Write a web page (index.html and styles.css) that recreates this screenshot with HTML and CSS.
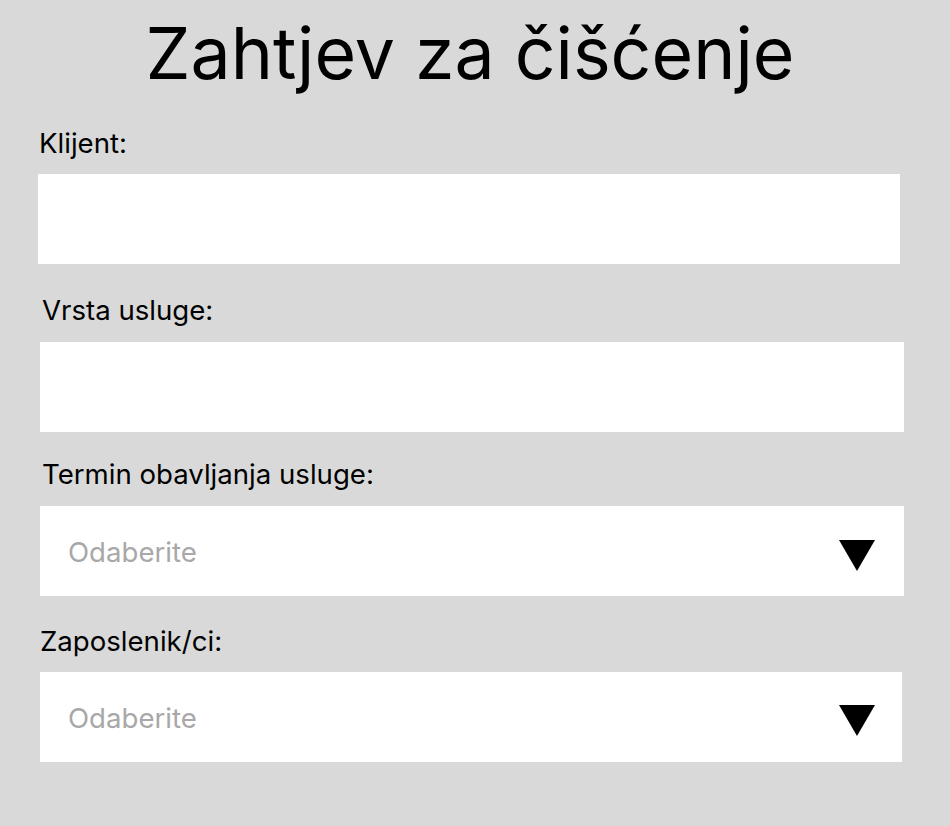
FILE: index.html
```html
<!DOCTYPE html>
<html lang="hr">
<head>
<meta charset="utf-8">
<title>Zahtjev za čišćenje</title>
<link rel="stylesheet" href="styles.css">
</head>
<body>
<main class="page">
  <h1 class="title">Zahtjev za čišćenje</h1>
  <form class="form">
    <div class="field field-client">
      <label class="label">Klijent:</label>
      <div class="box"></div>
    </div>
    <div class="field field-service">
      <label class="label">Vrsta usluge:</label>
      <div class="box"></div>
    </div>
    <div class="field field-term">
      <label class="label">Termin obavljanja usluge:</label>
      <div class="box select">
        <span class="placeholder">Odaberite</span>
        <svg class="arrow" width="36" height="31" viewBox="0 0 36 31"><polygon points="0,0 36,0 18,31" fill="#000"/></svg>
      </div>
    </div>
    <div class="field field-staff">
      <label class="label">Zaposlenik/ci:</label>
      <div class="box select">
        <span class="placeholder">Odaberite</span>
        <svg class="arrow" width="36" height="31" viewBox="0 0 36 31"><polygon points="0,0 36,0 18,31" fill="#000"/></svg>
      </div>
    </div>
  </form>
</main>
</body>
</html>
```

FILE: styles.css
```css
* { box-sizing: border-box; }
html, body {
  margin: 0;
  padding: 0;
  background: #d9d9d9;
}
body {
  font-family: Inter, "Liberation Sans", sans-serif;
  color: #000;
  width: 950px;
  height: 826px;
  overflow: hidden;
}
.page {
  padding-top: 10px;
}
.title {
  margin: 0;
  font-size: 71.5px;
  font-weight: 400;
  line-height: 87px;
  text-align: center;
  padding-right: 10px;
}
.form {
  display: flex;
  flex-direction: column;
}
.field {
  display: flex;
  flex-direction: column;
}
.label {
  font-size: 27.6px;
  line-height: 34px;
  margin-bottom: 14px;
}
.box {
  height: 90px;
  background: #fff;
}
.field-client { margin-top: 29px; margin-left: 38px; width: 862px; }
.field-client .label { padding-left: 1px; }
.field-service { margin-top: 29px; margin-left: 40px; width: 864px; }
.field-service .label { padding-left: 2px; margin-bottom: 15px; }
.field-term { margin-top: 25px; margin-left: 40px; width: 864px; }
.field-term .label { padding-left: 2px; margin-bottom: 15px; }
.field-staff { margin-top: 28px; margin-left: 40px; width: 862px; }
.field-staff .label { padding-left: 0; }
.select {
  display: flex;
  align-items: center;
  justify-content: space-between;
  padding-left: 28px;
  padding-right: 29px;
}
.field-staff .select { padding-right: 27px; }
.placeholder {
  font-size: 27.6px;
  line-height: 34px;
  color: #a8a8a8;
  margin-top: 2px;
}
.arrow {
  margin-top: 8px;
  display: block;
}
.field-staff .arrow { margin-top: 6px; }
```
